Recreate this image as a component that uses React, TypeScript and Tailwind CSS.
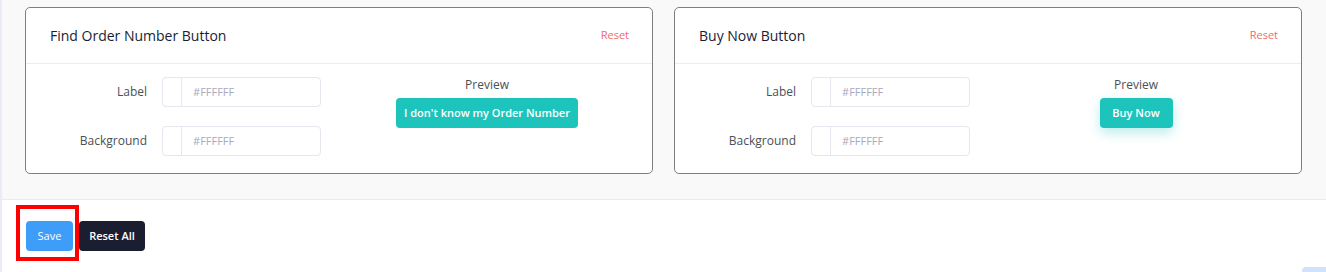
import { useState } from 'react';

type ButtonCardProps = {
  title: string;
  previewLabel: string;
  previewWidth: string;
  glow?: boolean;
};

function ColorField({ label }: { label: string }) {
  const [value, setValue] = useState('');
  return (
    <div className="flex items-center">
      <label className="w-[121px] text-right text-[12px] text-[#495057]">{label}</label>
      <div className="ml-[15px] flex h-[30px] w-[159px] rounded-[4px] border border-[#e6e6ef] bg-white">
        <div className="w-[22px] border-r border-[#e6e6ef]"></div>
        <input
          type="text"
          value={value}
          onChange={(e) => setValue(e.target.value)}
          placeholder="#FFFFFF"
          className="w-full px-[11px] text-[11px] text-[#495057] placeholder:text-[#a9a9bd] outline-none bg-transparent"
        />
      </div>
    </div>
  );
}

function ButtonCard({ title, previewLabel, previewWidth, glow }: ButtonCardProps) {
  return (
    <div className="w-[628px] h-[167px] rounded-[5px] border border-[#7f7f7f] bg-white">
      {/* Header */}
      <div className="flex h-[56px] items-center justify-between border-b border-[#ebebf0] pl-[24px] pr-[23px]">
        <h2 className="text-[14px] font-medium text-[#1a1d35]">{title}</h2>
        <button className="text-[11px] text-[#f46a6a]">Reset</button>
      </div>

      {/* Body */}
      <div className="flex pt-[13px]">
        <div className="flex w-[296px] flex-col gap-[19px]">
          <ColorField label="Label" />
          <ColorField label="Background" />
        </div>
        <div className="flex flex-1 flex-col items-center">
          <span className="text-[12px] leading-[16px] text-[#495057]">Preview</span>
          <button
            className={`mt-[5px] h-[30px] rounded-[4px] bg-[#1dc4bc] text-[11px] font-semibold text-white ${previewWidth} ${
              glow ? 'shadow-[0_5px_12px_rgba(29,196,188,0.3)]' : ''
            }`}
          >
            {previewLabel}
          </button>
        </div>
      </div>
    </div>
  );
}

export default function App() {
  return (
    <div className="relative flex h-[272px] w-full overflow-hidden bg-white font-['Open_Sans',sans-serif]">
      <div className="w-[2px] shrink-0 bg-[#ebeaf6]"></div>
      <div className="flex-1">
        {/* Cards */}
        <div className="flex h-[200px] gap-[21px] border-b border-[#ebebf0] bg-[#f9f9fa] pl-[23px] pt-[7px]">
          <ButtonCard
            title="Find Order Number Button"
            previewLabel="I don't know my Order Number"
            previewWidth="w-[182px]"
          />
          <ButtonCard title="Buy Now Button" previewLabel="Buy Now" previewWidth="w-[73px]" glow />
        </div>

        {/* Actions */}
        <div className="flex gap-[6px] pl-[24px] pt-[21px]">
          <div className="relative">
            <button className="h-[30px] w-[47px] rounded-[4px] bg-[#3d9df8] text-[11px] font-medium text-white">
              Save
            </button>
            <div className="pointer-events-none absolute left-[-10px] top-[-16px] h-[56px] w-[63px] border-[4px] border-[#ff0000]"></div>
          </div>
          <button className="h-[30px] w-[66px] rounded-[4px] bg-[#1b1d30] text-[11px] font-semibold text-white">
            Reset All
          </button>
        </div>
      </div>

      {/* floating widget peeking in */}
      <div className="absolute bottom-0 right-0 h-[5px] w-[24px] rounded-tl-[4px] bg-[#cfe3ff]"></div>
    </div>
  );
}
